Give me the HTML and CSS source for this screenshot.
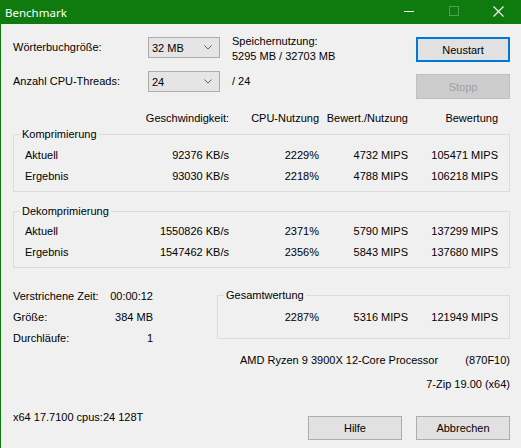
FILE: index.html
```html
<!DOCTYPE html>
<html lang="de">
<head>
    <meta charset="UTF-8">
    <title>Benchmark</title>
    <link rel="stylesheet" href="styles.css">
</head>
<body>
    <div class="window">
        <div class="titlebar">
            <span class="title">Benchmark</span>
            <div class="caption-buttons">
                <span class="cap-btn">
                    <svg width="10" height="10" viewBox="0 0 10 10"><line x1="0" y1="5.5" x2="10" y2="5.5" stroke="#fff" stroke-width="1"/></svg>
                </span>
                <span class="cap-btn dim">
                    <svg width="10" height="10" viewBox="0 0 10 10"><rect x="0.5" y="0.5" width="9" height="9" fill="none" stroke="currentColor" stroke-width="1"/></svg>
                </span>
                <span class="cap-btn">
                    <svg width="11" height="11" viewBox="0 0 11 11"><path d="M0.5 0.5 L10.5 10.5 M10.5 0.5 L0.5 10.5" stroke="#fff" stroke-width="1.1"/></svg>
                </span>
            </div>
        </div>

        <div class="content">
            <!-- settings and start/stop -->
            <div class="top">
                <div class="settings">
                    <span class="label">Wörterbuchgröße:</span>
                    <div class="combo">
                        <span>32 MB</span>
                        <svg width="8" height="5" viewBox="0 0 8 5"><polyline points="0.5,0.5 4,4 7.5,0.5" fill="none" stroke="#606060" stroke-width="1"/></svg>
                    </div>
                    <div class="memory">Speichernutzung:<br>5295 MB / 32703 MB</div>

                    <span class="label">Anzahl CPU-Threads:</span>
                    <div class="combo">
                        <span>24</span>
                        <svg width="8" height="5" viewBox="0 0 8 5"><polyline points="0.5,0.5 4,4 7.5,0.5" fill="none" stroke="#606060" stroke-width="1"/></svg>
                    </div>
                    <div class="threads">/ 24</div>
                </div>
                <div class="actions">
                    <button class="btn btn-default">Neustart</button>
                    <button class="btn" disabled>Stopp</button>
                </div>
            </div>

            <!-- results -->
            <div class="cols headers">
                <span></span>
                <span>Geschwindigkeit:</span>
                <span>CPU-Nutzung</span>
                <span>Bewert./Nutzung</span>
                <span>Bewertung</span>
            </div>

            <div class="group">
                <span class="group-title">Komprimierung</span>
                <div class="cols row">
                    <span>Aktuell</span><span>92376 KB/s</span><span>2229%</span><span>4732 MIPS</span><span>105471 MIPS</span>
                </div>
                <div class="cols row">
                    <span>Ergebnis</span><span>93030 KB/s</span><span>2218%</span><span>4788 MIPS</span><span>106218 MIPS</span>
                </div>
            </div>

            <div class="group group-dec">
                <span class="group-title">Dekomprimierung</span>
                <div class="cols row">
                    <span>Aktuell</span><span>1550826 KB/s</span><span>2371%</span><span>5790 MIPS</span><span>137299 MIPS</span>
                </div>
                <div class="cols row">
                    <span>Ergebnis</span><span>1547462 KB/s</span><span>2356%</span><span>5843 MIPS</span><span>137680 MIPS</span>
                </div>
            </div>

            <!-- totals -->
            <div class="summary">
                <div class="stats">
                    <span>Verstrichene Zeit:</span><span class="num">00:00:12</span>
                    <span>Größe:</span><span class="num">384 MB</span>
                    <span>Durchläufe:</span><span class="num">1</span>
                </div>
                <div class="group group-total">
                    <span class="group-title">Gesamtwertung</span>
                    <div class="total-row">
                        <span>2287%</span><span>5316 MIPS</span><span>121949 MIPS</span>
                    </div>
                </div>
            </div>

            <div class="cpu">
                <span>AMD Ryzen 9 3900X 12-Core Processor</span>
                <span>(870F10)</span>
            </div>
            <div class="version">7-Zip 19.00 (x64)</div>

            <div class="footer">
                <span class="sysinfo">x64 17.7100 cpus:24 128T</span>
                <div class="footer-buttons">
                    <button class="btn">Hilfe</button>
                    <button class="btn">Abbrechen</button>
                </div>
            </div>
        </div>
    </div>
</body>
</html>
```

FILE: styles.css
```css
body {
    margin: 0;
    background-color: #f0f0f0;
    font-family: "Liberation Sans", Arial, sans-serif;
    font-size: 11px;
    color: #000;
}
.window {
    width: 520px;
    height: 448px;
    border-left: 1px solid #0f7b0f;
    background-color: #f0f0f0;
    overflow: hidden;
}
.titlebar {
    height: 24px;
    background-color: #0f7b0f;
    display: flex;
    align-items: center;
    padding-left: 4px;
}
.title {
    color: #fff;
    font-family: "Noto Sans", sans-serif;
    font-size: 11.5px;
    line-height: 21px;
    flex: 1;
}
.caption-buttons {
    display: flex;
    height: 24px;
}
.cap-btn {
    width: 45px;
    display: flex;
    justify-content: center;
    align-items: center;
    padding-bottom: 2px;
    box-sizing: border-box;
}
.cap-btn.dim {
    color: rgba(255, 255, 255, 0.28);
}
.content {
    padding: 13px 11px 0 12px;
}
.top {
    display: flex;
    align-items: flex-start;
}
.settings {
    display: grid;
    grid-template-columns: 135px 72px auto;
    grid-template-rows: 21px 21px;
    row-gap: 13px;
}
.label {
    line-height: 21px;
}
.combo {
    box-sizing: border-box;
    height: 21px;
    border: 1px solid #acacac;
    background-color: #e5e5e5;
    display: flex;
    align-items: center;
    justify-content: space-between;
    padding: 0 7px 0 3px;
}
.memory {
    margin-left: 12px;
    margin-top: -3px;
    line-height: 15px;
}
.threads {
    margin-left: 12px;
    line-height: 21px;
}
.actions {
    margin-left: auto;
    display: flex;
    flex-direction: column;
    gap: 12px;
}
.btn {
    width: 94px;
    height: 25px;
    box-sizing: border-box;
    border: 1px solid #adadad;
    background-color: #e1e1e1;
    font-family: "Liberation Sans", Arial, sans-serif;
    font-size: 11px;
    color: #000;
    padding: 0;
}
.btn-default {
    border: 2px solid #0078d7;
}
.btn:disabled {
    background-color: #cccccc;
    border-color: #bfbfbf;
    color: #a0a0a0;
}
.cols {
    display: grid;
    grid-template-columns: 105px 99px 90px 89px 90px;
    line-height: 13px;
    text-align: right;
}
.cols span:first-child {
    text-align: left;
}
.headers {
    margin-top: 13px;
    padding-left: 12px;
}
.group {
    position: relative;
    border: 1px solid #dcdcdc;
    margin-top: 9px;
    padding: 10px 0 4px 11px;
}
.group-title {
    position: absolute;
    top: -7px;
    left: 6px;
    padding: 0 2px;
    line-height: 13px;
    background-color: #f0f0f0;
}
.group .row {
    line-height: 21px;
}
.group-dec {
    margin-top: 19px;
    padding-top: 9px;
}
.summary {
    display: flex;
    align-items: flex-start;
    margin-top: 18px;
}
.stats {
    width: 140px;
    display: grid;
    grid-template-columns: 1fr auto;
    line-height: 21px;
}
.stats .num {
    text-align: right;
}
.group-total {
    margin-left: auto;
    width: 291px;
    margin-top: 9px;
    padding: 11px 0 10px 0;
}
.total-row {
    display: grid;
    grid-template-columns: 101px 89px 90px;
    line-height: 21px;
    text-align: right;
}
.cpu {
    display: flex;
    justify-content: space-between;
    margin: 5px 0 0 227px;
    line-height: 13px;
}
.version {
    text-align: right;
    margin-top: 11px;
    line-height: 13px;
}
.footer {
    display: flex;
    align-items: flex-start;
    margin-top: 20px;
}
.sysinfo {
    line-height: 13px;
    flex: 1;
}
.footer-buttons {
    display: flex;
    gap: 14px;
    margin-top: 5px;
}
.footer-buttons .btn {
    height: 24px;
}
```
